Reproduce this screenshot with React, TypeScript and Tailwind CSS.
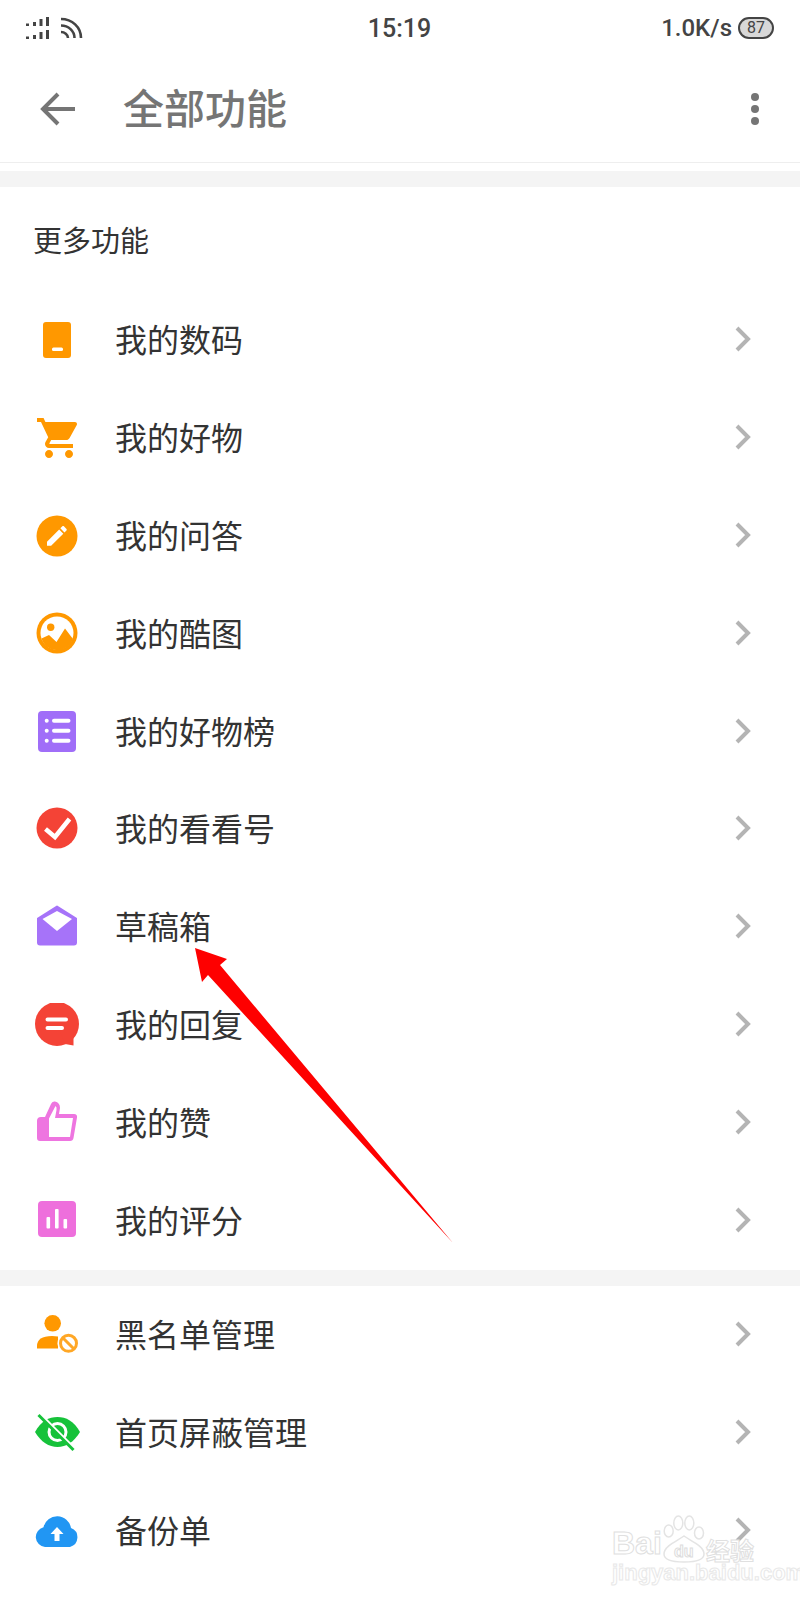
import type { ReactNode } from 'react';

const font = "font-['Roboto','Noto_Sans_CJK_SC',sans-serif]";

function Box({ children }: { children: ReactNode }) {
  return (
    <svg width="45" height="44" viewBox="0 0 45 44" className="shrink-0">
      {children}
    </svg>
  );
}

const icons: Record<string, ReactNode> = {
  phone: (
    <Box>
      <rect x="8" y="4" width="28" height="36" rx="3" fill="#ff9800" />
      <rect x="17" y="29.5" width="11" height="3.5" rx="1.5" fill="#fff" />
    </Box>
  ),
  cart: (
    <Box>
      <g transform="translate(0,-2) scale(2)" fill="#ff9800">
        <path d="M7 18c-1.1 0-1.99.9-1.99 2S5.9 22 7 22s2-.9 2-2-.9-2-2-2zM1 2v2h2l3.6 7.59-1.35 2.45c-.16.28-.25.61-.25.96 0 1.1.9 2 2 2h12v-2H7.42c-.14 0-.25-.11-.25-.25l.03-.12.9-1.63h7.45c.75 0 1.41-.41 1.75-1.03l3.58-6.49c.08-.14.12-.31.12-.48 0-.55-.45-1-1-1H5.21l-.94-2H1zm16 16c-1.1 0-1.99.9-1.99 2s.89 2 1.99 2 2-.9 2-2-.9-2-2-2z" />
      </g>
    </Box>
  ),
  pencil: (
    <Box>
      <circle cx="22" cy="22" r="20.5" fill="#ff9800" />
      <g transform="translate(8.7,8.7) scale(1.1)" fill="#fff">
        <path d="M3 17.25V21h3.75L17.81 9.94l-3.75-3.75L3 17.25zM20.71 7.04c.39-.39.39-1.02 0-1.41l-2.34-2.34c-.39-.39-1.02-.39-1.41 0l-1.83 1.83 3.75 3.75 1.83-1.83z" />
      </g>
    </Box>
  ),
  picture: (
    <Box>
      <circle cx="22" cy="21" r="20.5" fill="#ff9800" />
      <circle cx="22" cy="21" r="16.5" fill="#fff" />
      <circle cx="15.7" cy="15.3" r="3.7" fill="#ff9800" />
      <path d="M6.5 26.5L14 23l7.5 7L30 16.5l8 10.5A16.5 16.5 0 0 1 6.5 26.5Z" fill="#ff9800" />
    </Box>
  ),
  list: (
    <Box>
      <rect x="3" y="1" width="38" height="41" rx="4" fill="#a06ef8" />
      <g fill="#fff">
        <circle cx="11.7" cy="10.7" r="2" />
        <circle cx="11.7" cy="20.7" r="2" />
        <circle cx="11.7" cy="30.7" r="2" />
      </g>
      <g stroke="#fff" strokeWidth="4" strokeLinecap="round">
        <path d="M19 10.7H33.5M19 20.7H33.5M19 30.7H33.5" />
      </g>
    </Box>
  ),
  check: (
    <Box>
      <circle cx="22" cy="21" r="20.5" fill="#f44336" />
      <path d="M10.5 22L20 30L34.5 12" fill="none" stroke="#fff" strokeWidth="4.5" />
    </Box>
  ),
  mail: (
    <Box>
      <path
        d="M22 1.5L41 13.5V37.5a2 2 0 0 1-2 2H5a2 2 0 0 1-2-2V13.5Z"
        fill="#a673f9"
        stroke="#a673f9"
        strokeWidth="2"
        strokeLinejoin="round"
      />
      <path d="M22 6L37 14L22 26L7.5 14Z" fill="#fff" />
    </Box>
  ),
  reply: (
    <Box>
      <circle cx="22" cy="21" r="22" fill="#f44336" />
      <path d="M22 21H38.5V42.5L30 41Z" fill="#f44336" />
      <path d="M12.5 16.5H31M12.5 25H27" stroke="#fff" strokeWidth="4" strokeLinecap="round" />
    </Box>
  ),
  thumb: (
    <Box>
      <path
        d="M5 40Q2 40 2 37V20Q2 16 6 16H10L16 3Q17 0 20 0.5Q25 1.5 25 7L24 13H39Q42.5 13 42 16.5L38.5 37Q38 40 35 40Z"
        fill="#ee75e0"
      />
      <path d="M14 36V17.5L20.5 5Q22 6 21.5 9L20 17H38L35 36Z" fill="#fff" />
    </Box>
  ),
  bars: (
    <Box>
      <rect x="3" y="2" width="38" height="36" rx="4" fill="#ee6fdc" />
      <g fill="#fff">
        <rect x="11.5" y="18" width="3.6" height="11.5" rx="1" />
        <rect x="20" y="10" width="3.6" height="19.5" rx="1" />
        <rect x="28.5" y="20" width="3.6" height="9.5" rx="1" />
      </g>
    </Box>
  ),
  block: (
    <Box>
      <circle cx="17.7" cy="10.3" r="8.3" fill="#ff9800" />
      <path d="M2 35.5V33Q2 23 17 23Q20 23 23 23.5V35.5Z" fill="#ff9800" />
      <circle cx="33.5" cy="30.3" r="11" fill="#fff" />
      <circle cx="33.5" cy="30.3" r="8" fill="none" stroke="#ffa726" strokeWidth="3" />
      <path d="M28 25L39 36" stroke="#ffa726" strokeWidth="3" />
    </Box>
  ),
  eye: (
    <Box>
      <path d="M0 21C6 10 14 6 22.5 6S39 10 45 21C39 31 31 36 22.5 36S6 31 0 21Z" fill="#16c23a" />
      <circle cx="22.5" cy="21" r="8.5" fill="#16c23a" stroke="#fff" strokeWidth="3" />
      <path d="M5 3L40 38" stroke="#fff" strokeWidth="3" />
      <path d="M3.5 4L38.5 39" stroke="#16c23a" strokeWidth="3" />
    </Box>
  ),
  cloud: (
    <Box>
      <path d="M10 38A10 10 0 0 1 8.5 18.3A14 14 0 0 1 36 19A10 10 0 0 1 35 38Z" fill="#2196f3" />
      <path d="M22 18L15.5 25H19.5V32H24.5V25H28.5Z" fill="#fff" />
    </Box>
  ),
};

function Row({ icon, label }: { icon: string; label: string }) {
  return (
    <div className="flex h-[97.9px] items-center pl-[35px] pr-[48px]">
      {icons[icon]}
      <span className="ml-[35px] flex-1 translate-y-px text-[32px] leading-none text-[#333]">{label}</span>
      <svg width="18" height="26" viewBox="0 0 18 26" fill="none" className="-translate-y-px">
        <path d="M3 2L14 13L3 24" stroke="#b4b4b4" strokeWidth="4" />
      </svg>
    </div>
  );
}

const mainRows = [
  ['phone', '我的数码'],
  ['cart', '我的好物'],
  ['pencil', '我的问答'],
  ['picture', '我的酷图'],
  ['list', '我的好物榜'],
  ['check', '我的看看号'],
  ['mail', '草稿箱'],
  ['reply', '我的回复'],
  ['thumb', '我的赞'],
  ['bars', '我的评分'],
];

const otherRows = [
  ['block', '黑名单管理'],
  ['eye', '首页屏蔽管理'],
  ['cloud', '备份单'],
];

export default function App() {
  return (
    <div className={`relative h-[1600px] w-[800px] overflow-hidden bg-white ${font}`}>
      {/* 状态栏 */}
      <div className="flex h-[56px] items-center justify-between pl-[25px] pr-[26px] text-[#444]">
        <div className="flex w-[200px] items-center gap-[9px]">
          <svg width="26" height="22" viewBox="0 0 26 22" fill="#444">
            <rect x="21" y="0" width="3" height="9" />
            <rect x="14.5" y="2" width="3" height="7" />
            <rect x="8" y="5" width="3" height="4" />
            <rect x="1" y="6.5" width="3" height="2.5" />
            <rect x="21" y="13" width="3" height="9" />
            <rect x="14.5" y="15" width="3" height="7" />
            <rect x="8" y="18" width="3" height="4" />
            <rect x="1" y="19.5" width="3" height="2.5" />
          </svg>
          <svg width="23" height="22" viewBox="0 0 23 22" fill="none" stroke="#444" strokeWidth="2.6">
            <path d="M1 2C12 2 21 10 21 21" />
            <path d="M1 8.5C8.5 8.5 14.5 14 14.5 21" />
            <path d="M1 15C4.5 15 8 17.5 8 21" />
          </svg>
        </div>
        <span className="text-[25px] font-medium leading-none">15:19</span>
        <div className="flex w-[200px] items-center justify-end gap-[6px]">
          <span className="text-[24px] font-medium leading-none">1.0K/s</span>
          <div className="flex h-[22px] w-[36px] items-center justify-center rounded-[11px] border-2 border-[#444] bg-[#d8d8d8] text-[16px] leading-none">
            87
          </div>
        </div>
      </div>

      {/* 标题栏 */}
      <div className="flex h-[107px] items-center border-b border-[#eeeeee] pl-[40px] pr-[41px]">
        <svg width="36" height="34" viewBox="0 0 36 34" fill="none" stroke="#757575" strokeWidth="4">
          <path d="M35 17H4M18 2L3 17L18 32" />
        </svg>
        <span className="ml-[47px] flex-1 translate-y-px text-[41px] font-medium leading-none text-[#757575]">全部功能</span>
        <div className="flex flex-col gap-[4px]">
          <div className="h-[8px] w-[8px] rounded-full bg-[#757575]" />
          <div className="h-[8px] w-[8px] rounded-full bg-[#757575]" />
          <div className="h-[8px] w-[8px] rounded-full bg-[#757575]" />
        </div>
      </div>

      <div className="h-[8px]" />
      <div className="h-[16px] bg-[#f4f4f4]" />

      <div className="flex h-[104px] items-center pl-[33px] pt-[6px] text-[29px] leading-none text-[#333]">更多功能</div>

      {mainRows.map(([icon, label]) => (
        <Row key={label} icon={icon} label={label} />
      ))}

      <div className="h-[16px] bg-[#f4f4f4]" />

      {otherRows.map(([icon, label]) => (
        <Row key={label} icon={icon} label={label} />
      ))}

      {/* 红色箭头 */}
      <svg className="absolute left-0 top-0" width="800" height="1600" viewBox="0 0 800 1600">
        <path d="M195 948L227 959L220 965L453 1243L208 975L202 982Z" fill="#fe0000" />
      </svg>

      {/* 水印 */}
      <div className="absolute left-[612px] top-[1514px] h-[70px] w-[146px] font-['Liberation_Sans',sans-serif] text-white">
        <svg className="absolute left-[50px] top-0" width="44" height="50" viewBox="0 0 44 50" fill="#fff" stroke="#e4e4e4" strokeWidth="1.5">
          <ellipse cx="6.7" cy="17" rx="4.5" ry="6" />
          <ellipse cx="16.3" cy="9" rx="4.5" ry="7" />
          <ellipse cx="27.3" cy="9" rx="4.5" ry="7" />
          <ellipse cx="37" cy="19" rx="4.5" ry="6" />
          <path d="M22 22C15 27 2 32 2 40C2 46 10 48 22 48C34 48 42 46 42 40C42 32 29 27 22 22Z" />
        </svg>
        <div className="absolute left-[62px] top-[30px] text-[16px] font-bold leading-none [-webkit-text-stroke:1px_#dddddd]">du</div>
        <div className="absolute bottom-[25px] left-0 text-[32px] font-bold leading-none [-webkit-text-stroke:1px_#e0e0e0]">Bai</div>
        <div className="absolute left-[94px] top-[24px] font-['Noto_Sans_CJK_SC',sans-serif] text-[24px] font-bold leading-none [-webkit-text-stroke:1px_#e0e0e0]">经验</div>
        <div className="absolute bottom-0 left-0 text-[22px] font-bold leading-none [-webkit-text-stroke:1px_#e8e8e8]">
          jingyan.baidu.com
        </div>
      </div>
    </div>
  );
}
